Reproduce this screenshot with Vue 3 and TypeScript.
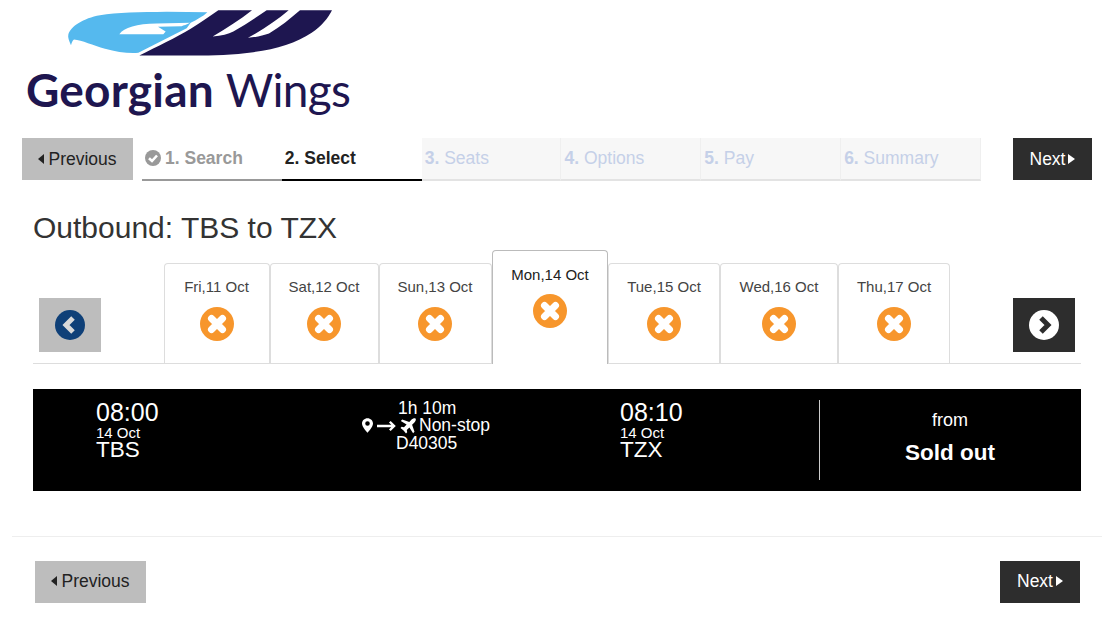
<script setup lang="ts">
interface DateTab { label: string; active?: boolean; width: number }
const tabs: DateTab[] = [
  { label: 'Fri,11 Oct', width: 106 },
  { label: 'Sat,12 Oct', width: 109 },
  { label: 'Sun,13 Oct', width: 113 },
  { label: 'Mon,14 Oct', width: 116, active: true },
  { label: 'Tue,15 Oct', width: 112 },
  { label: 'Wed,16 Oct', width: 118 },
  { label: 'Thu,17 Oct', width: 112 },
]
const laterSteps = [
  { n: '3.', t: 'Seats' },
  { n: '4.', t: 'Options' },
  { n: '5.', t: 'Pay' },
  { n: '6.', t: 'Summary' },
]
</script>

<template>
  <div class="page">
    <header class="brand">
      <svg class="wing" viewBox="0 0 1200 170" width="400" height="57" aria-hidden="true">
        <path fill="#55b9ee" fill-rule="evenodd" d="M213 135 C207 122 203 112 205 103 C212 78 250 54 300 45 C350 37 420 36 500 35 L622 36 C610 48 590 58 572 68 L560 84 L415 158 C385 160 350 156 315 146 C280 136 245 120 222 118 C217 122 215 128 213 135 Z M358 102 C372 82 410 71 470 70 L570 68 C560 74 550 76 545 78 L474 80 L497 94 L490 102 Z"/>
        <path fill="#1e1650" d="M418 166 C470 140 530 112 572 86 C600 68 630 48 655 30 L756 30 C720 58 680 84 638 109 C665 107 685 102 700 94 C735 74 768 52 800 30 L866 30 C830 60 790 88 744 113 C768 111 790 106 807 100 C840 80 870 56 900 30 L996 30 C985 52 965 78 935 98 C890 128 830 148 760 156 C700 164 640 166 580 166 Z"/>
      </svg>
      <div class="wordmark"><span class="wm-strong">Georgian</span> <span class="wm-light">Wings</span></div>
    </header>

    <nav class="wizard">
      <button class="btn btn-prev wizard-prev"><i class="tri tri-left"></i>Previous</button>
      <div class="steps">
        <div class="step done">
          <svg class="check" viewBox="0 0 16 16" width="16" height="16" aria-hidden="true">
            <circle cx="8" cy="8" r="8" fill="#999"/>
            <path d="M4 8.2 L7 11 L12 5.5" fill="none" stroke="#fff" stroke-width="2.6"/>
          </svg>1. Search
        </div>
        <div class="step current">2. Select</div>
        <div v-for="s in laterSteps" :key="s.n" class="step todo"><b>{{ s.n }}</b> {{ s.t }}</div>
      </div>
      <button class="btn btn-next wizard-next">Next<i class="tri tri-right"></i></button>
    </nav>

    <main class="content">
      <h1 class="title">Outbound: TBS to TZX</h1>

      <section class="dates">
        <button class="arrow arrow-prev" aria-label="Earlier dates">
          <svg viewBox="0 0 30 30" width="30" height="30" aria-hidden="true">
            <circle cx="15" cy="15" r="15" fill="#0f4078"/>
            <path d="M18 8 L11 15 L18 22" fill="none" stroke="#d9d9d9" stroke-width="5"/>
          </svg>
        </button>
        <div class="tabs">
          <div v-for="t in tabs" :key="t.label" class="tab" :class="{ active: t.active }" :style="{ width: t.width + 'px' }">
            <div class="tab-label">{{ t.label }}</div>
            <svg class="unavailable" viewBox="0 0 34 34" width="34" height="34" aria-hidden="true">
              <circle cx="17" cy="17" r="17" fill="#f7962c"/>
              <path d="M11.500 11.500 L22.500 22.500 M22.500 11.500 L11.500 22.500" stroke="#fff" stroke-width="7" stroke-linecap="round"/>
            </svg>
          </div>
        </div>
        <button class="arrow arrow-next" aria-label="Later dates">
          <svg viewBox="0 0 30 30" width="30" height="30" aria-hidden="true">
            <circle cx="15" cy="15" r="15" fill="#fff"/>
            <path d="M12 8 L19 15 L12 22" fill="none" stroke="#2d2d2d" stroke-width="5"/>
          </svg>
        </button>
      </section>

      <section class="flight">
        <div class="point point-dep">
          <div class="time">08:00</div>
          <div class="day">14 Oct</div>
          <div class="code">TBS</div>
        </div>
        <div class="route">
          <div class="duration">1h 10m</div>
          <div class="stops">
            <svg class="pin" viewBox="0 0 12 16" width="11" height="15" aria-hidden="true">
              <path fill="#fff" fill-rule="evenodd" d="M6 0 C2.7 0 0 2.6 0 5.8 C0 9.500 6 16 6 16 C6 16 12 9.500 12 5.8 C12 2.6 9.300 0 6 0 Z M6 3.400 A2.500 2.500 0 1 1 6 8.400 A2.500 2.500 0 1 1 6 3.400 Z"/>
            </svg>
            <svg class="dash" viewBox="0 0 20 12" width="19" height="12" aria-hidden="true">
              <path d="M0 6 H17 M13.500 1.500 L18 6 L13.500 10.500" fill="none" stroke="#fff" stroke-width="2.500"/>
            </svg>
            <svg class="plane" viewBox="0 0 16 16" width="16" height="16" aria-hidden="true">
              <path fill="#fff" d="M15.500 .5 C14.500 -.3 12.800 .4 11.600 1.600 L9.300 3.900 L2.200 1.500 L.8 2.900 L6.600 6.600 L4 9.200 L1.700 8.800 L.5 10 L3.600 12.400 L6 15.500 L7.200 14.300 L6.800 12 L9.400 9.400 L13.100 15.200 L14.500 13.800 L12.100 6.700 L14.400 4.400 C15.600 3.200 16.300 1.500 15.500 .5 Z"/>
            </svg>
            <span>Non-stop</span>
          </div>
          <div class="number">D40305</div>
        </div>
        <div class="point point-arr">
          <div class="time">08:10</div>
          <div class="day">14 Oct</div>
          <div class="code">TZX</div>
        </div>
        <div class="price">
          <div class="from">from</div>
          <div class="sold">Sold out</div>
        </div>
      </section>
    </main>

    <footer class="actions">
      <button class="btn btn-prev"><i class="tri tri-left"></i>Previous</button>
      <button class="btn btn-next footer-next">Next<i class="tri tri-right"></i></button>
    </footer>
  </div>
</template>

<style>
html, body { margin: 0; background: #fff; }
</style>

<style scoped>
.page {
  width: 1114px;
  height: 637px;
  overflow: hidden;
  font-family: "Liberation Sans", Arial, sans-serif;
  color: #333;
  background: #fff;
}
.brand { height: 138px; box-sizing: border-box; }
.wing { display: block; }
.wordmark {
  margin: 5px 0 0 26px;
  font-family: Lato, "Noto Sans", sans-serif;
  font-size: 46px;
  line-height: 56px;
  color: #1e1650;
  white-space: nowrap;
}
.wm-strong { font-weight: 700; letter-spacing: .2px; }
.wm-light { font-weight: 400; letter-spacing: -.7px; }

.wizard { display: flex; align-items: flex-start; padding: 0 22px; }
.btn {
  display: flex;
  align-items: center;
  justify-content: center;
  height: 42px;
  border: 0;
  padding: 0;
  font-family: inherit;
  font-size: 17.5px;
}
.btn-prev { width: 111px; background: #bdbdbd; color: #222; }
.btn-next { width: 79px; background: #2d2d2d; color: #fff; }
.wizard-next { margin-left: auto; }
.tri { display: inline-block; width: 0; height: 0; border-top: 5.5px solid transparent; border-bottom: 5.5px solid transparent; }
.tri-left { border-right: 6px solid currentColor; margin-right: 4px; }
.tri-right { border-left: 7px solid currentColor; margin-left: 3px; }

.steps { display: flex; margin-left: 9px; width: 839px; height: 43px; }
.step {
  width: 140px;
  box-sizing: border-box;
  height: 43px;
  line-height: 40px;
  padding-left: 3px;
  font-size: 17.5px;
  border-bottom: 2px solid #999;
}
.step.done { font-weight: 700; color: #999; }
.check { vertical-align: -2px; margin-right: 4px; }
.step.current { font-weight: 700; color: #222; border-bottom-color: #000; }
.step.todo {
  color: #c5d0e8;
  background: #f7f7f7;
  border-bottom-color: #e3e3e3;
  border-right: 1px solid #efefef;
}

.content { padding: 0 33px; }
.title {
  margin: 29px 0 0;
  font-weight: 400;
  font-size: 30px;
  line-height: 36px;
  color: #333;
}
.dates {
  display: flex;
  align-items: flex-end;
  height: 113px;
  margin-top: 4px;
  border-bottom: 1px solid #ddd;
}
.arrow {
  width: 62px;
  height: 54px;
  margin: 0 6px 11px;
  padding: 0;
  border: 0;
  display: flex;
  align-items: center;
  justify-content: center;
  flex: none;
}
.arrow-prev { background: #bdbdbd; }
.arrow-next { background: #2d2d2d; margin-left: auto; }
.tabs { display: flex; align-items: flex-end; margin-left: 57px; }
.tab {
  box-sizing: border-box;
  height: 100px;
  border: 1px solid #ddd;
  border-bottom: 0;
  border-radius: 4px 4px 0 0;
  text-align: center;
  background: #fff;
}
.tab:nth-child(-n+3) { padding-right: 1px; }
.tab-label { font-size: 15px; line-height: 18px; margin-top: 14px; color: #444; }
.unavailable { display: block; margin: 11px auto 0; }
.tab.active {
  height: 114px;
  margin-bottom: -1px;
  border-color: #bbb;
}
.tab.active .tab-label { color: #222; margin-top: 15px; }
.tab.active .unavailable { margin-top: 10px; }

.flight {
  display: flex;
  height: 102px;
  margin-top: 25px;
  background: #000;
  color: #fff;
}
.point { padding-top: 10px; flex: none; }
.point-dep { margin-left: 63px; width: 266px; }
.point-arr { width: 199px; margin-left: -1px; }
.time { font-size: 25px; line-height: 27px; }
.day { font-size: 15px; line-height: 14px; }
.code { font-size: 22.5px; line-height: 20px; }
.route { width: 259px; flex: none; font-size: 17.5px; line-height: 18px; padding-top: 10px; }
.duration { padding-left: 36px; }
.number { padding-left: 34px; }
.stops { display: flex; align-items: center; gap: 3px; height: 17px; }
.dash { margin-left: 1px; }
.plane { margin-left: 1px; }
.stops span { margin-bottom: 2px; }
.price {
  flex: 1;
  margin: 11px 0;
  padding-right: 1px;
  border-left: 1px solid #ccc;
  text-align: center;
}
.from { font-size: 18px; line-height: 20px; margin-top: 10px; }
.sold { font-size: 22.5px; font-weight: 700; line-height: 26px; margin-top: 10px; }

.actions {
  display: flex;
  justify-content: space-between;
  margin: 45px 12px 0;
  width: 1090px;
  border-top: 1px solid #eee;
  padding: 24px 22px 0 23px;
  box-sizing: border-box;
}
.actions .btn { padding-bottom: 2px; }
.footer-next { width: 80px; }
</style>
